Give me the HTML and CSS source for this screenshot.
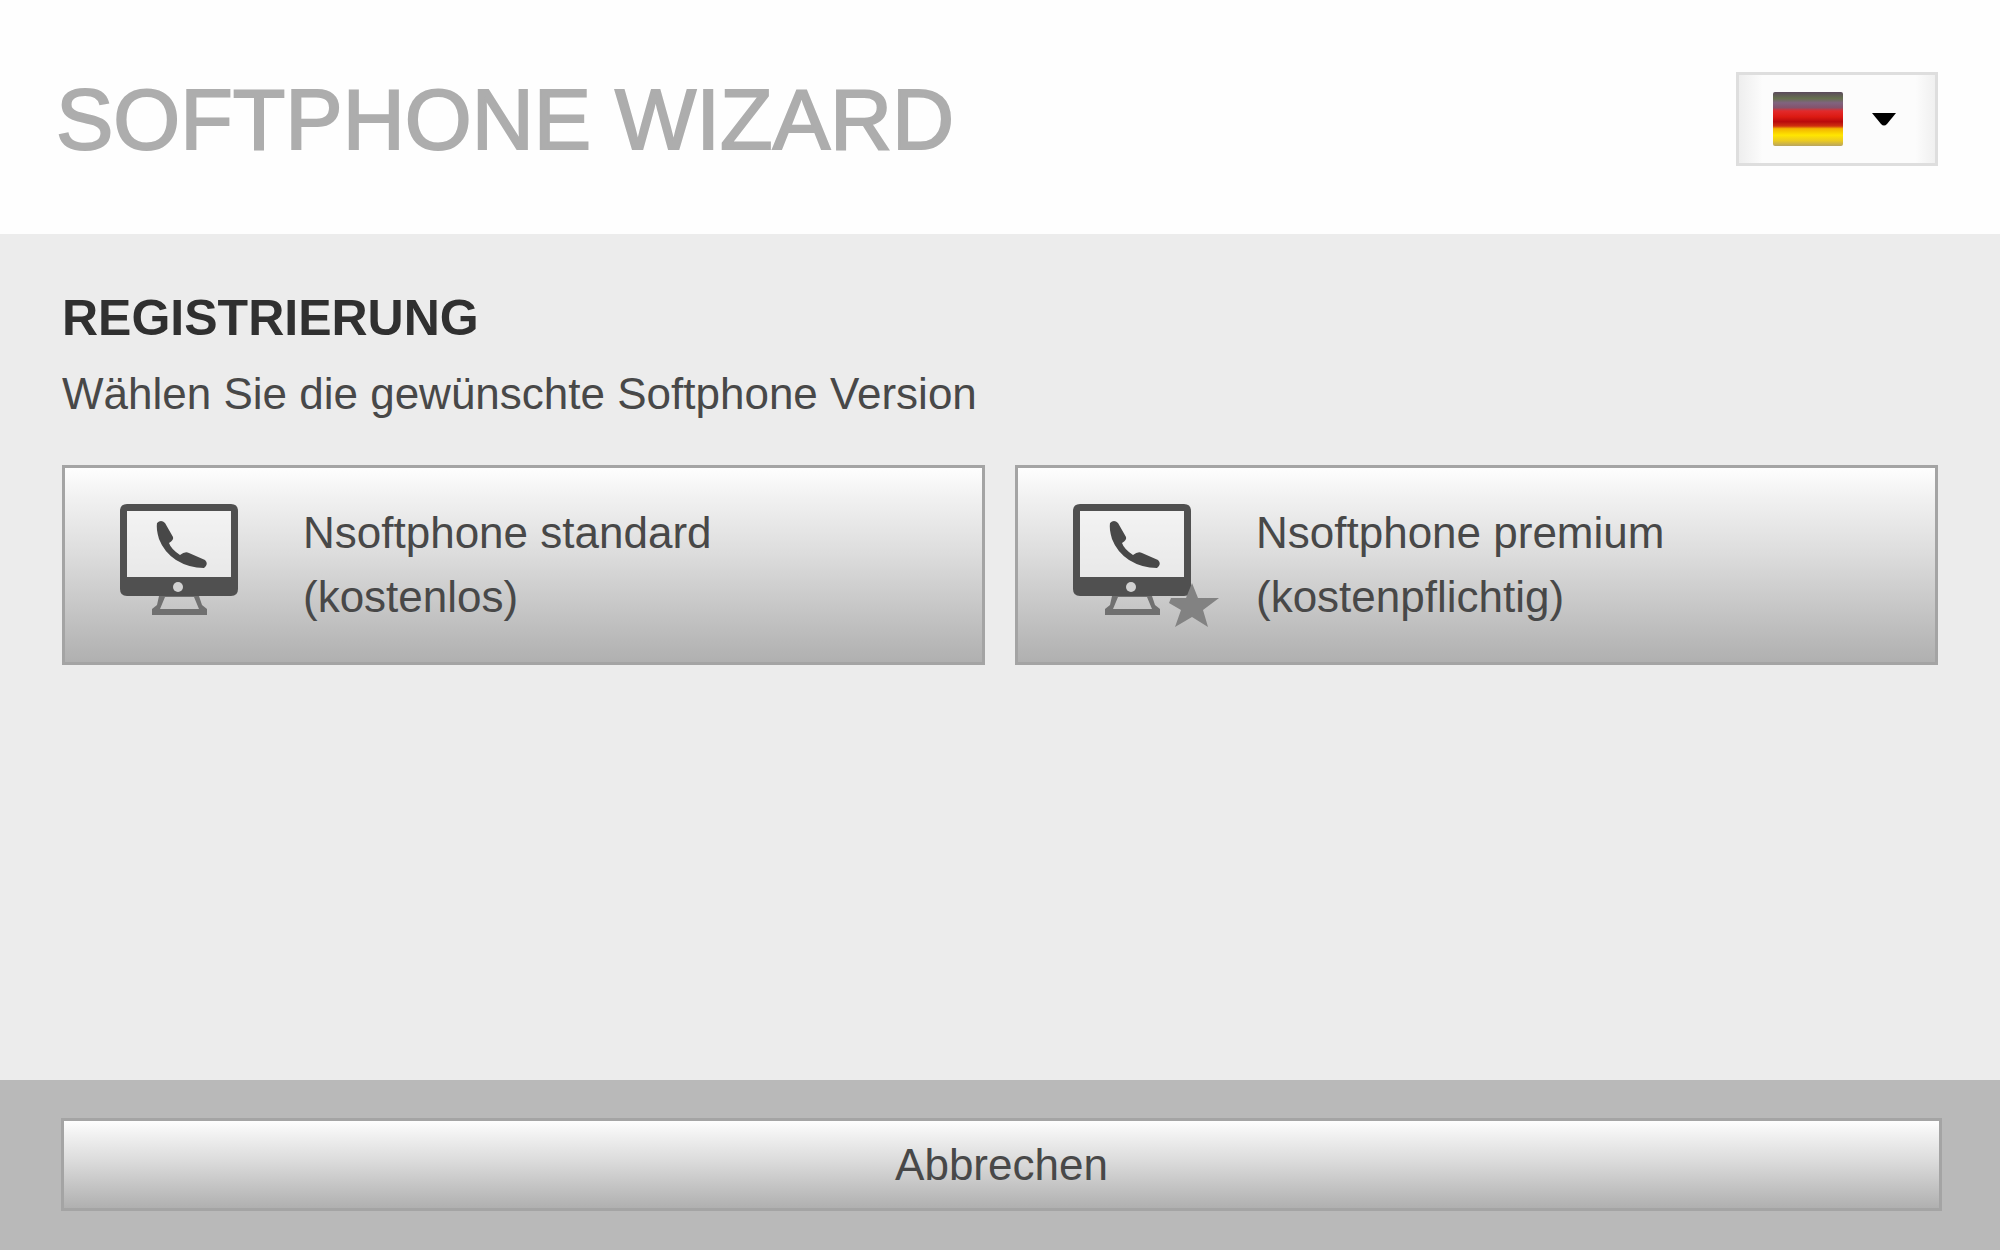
FILE: index.html
```html
<!DOCTYPE html>
<html lang="de">
<head>
<meta charset="utf-8">
<meta name="viewport" content="width=device-width, initial-scale=1">
<title>Softphone Wizard</title>
<link rel="stylesheet" href="styles.css">
</head>
<body>
<header class="header">
  <h1 class="title">SOFTPHONE WIZARD</h1>
  <button class="language" type="button" aria-haspopup="listbox" aria-label="Sprache: Deutsch">
    <svg class="flag" viewBox="0 0 72 56" preserveAspectRatio="none" aria-hidden="true">
      <defs>
        <linearGradient id="flag-shade" x1="0" y1="0" x2="0" y2="1">
          <stop offset="0" stop-color="#5b4a5c"/>
          <stop offset=".12" stop-color="#66704f"/>
          <stop offset=".2" stop-color="#80637f"/>
          <stop offset=".29" stop-color="#85536c"/>
          <stop offset=".35" stop-color="#e22a2c"/>
          <stop offset=".46" stop-color="#dc1a12"/>
          <stop offset=".55" stop-color="#b80a0c"/>
          <stop offset=".63" stop-color="#cf3010"/>
          <stop offset=".68" stop-color="#f3b400"/>
          <stop offset=".8" stop-color="#ffe600"/>
          <stop offset=".9" stop-color="#eccb20"/>
          <stop offset="1" stop-color="#b9a560"/>
        </linearGradient>
      </defs>
      <rect width="72" height="56" rx="2" fill="url(#flag-shade)"/>
    </svg>
    <svg class="caret" viewBox="0 0 26 14" aria-hidden="true">
      <path d="M1 1H25L16 12Q13 15 10 12Z" fill="#000"/>
    </svg>
  </button>
</header>

<main class="main">
  <h2 class="heading">REGISTRIERUNG</h2>
  <p class="lead">Wählen Sie die gewünschte Softphone Version</p>
  <div class="choices">
    <button class="panel choice" type="button">
      <svg class="choice-icon" viewBox="0 0 150 124" aria-hidden="true">
        <use href="#monitor"/>
      </svg>
      <span class="choice-label">Nsoftphone standard<br>(kostenlos)</span>
    </button>
    <button class="panel choice" type="button">
      <svg class="choice-icon" viewBox="0 0 150 124" aria-hidden="true">
        <defs>
          <g id="monitor">
            <path fill="#505050" fill-rule="evenodd" d="M8 1H112Q119 1 119 8V86Q119 93 112 93H8Q1 93 1 86V8Q1 1 8 1ZM8 8V74H112V8Z"/>
            <path fill="#f6f6f6" fill-opacity=".6" d="M8 8H112V74H8Z"/>
            <circle cx="59" cy="84" r="5" fill="#d2d2d2"/>
            <path fill="#707070" fill-rule="evenodd" d="M40 93H80L83 102L88 106V112H33V106L38 102ZM46 94L41 106H80L75 94Z"/>
            <path fill="#484848" d="M38 20Q42 16 46 20L54 34Q55 37 50 40Q52 46 61 52Q66 48 70 50L86 57Q90 61 85 65Q70 65 57 57Q45 49 40 36Q37 26 38 20Z"/>
          </g>
        </defs>
        <use href="#monitor"/>
        <path fill="#828282" d="M120 80L126 95L147 95L131 107L136 124L120 114L103 124L109 107L97 100L99 95L114 95Z"/>
      </svg>
      <span class="choice-label">Nsoftphone premium<br>(kostenpflichtig)</span>
    </button>
  </div>
</main>

<footer class="footer">
  <button class="panel cancel" type="button">Abbrechen</button>
</footer>
</body>
</html>
```
FILE: styles.css
```css
* {
  box-sizing: border-box;
}

body {
  margin: 0;
  min-height: 100vh;
  display: flex;
  flex-direction: column;
  background: #ececec;
  color: #484848;
  font-family: "Liberation Sans", Arial, sans-serif;
  font-size: 44px;
  line-height: 64px;
}

button {
  margin: 0;
  color: inherit;
  font: inherit;
  cursor: pointer;
}

.header {
  display: flex;
  align-items: center;
  justify-content: space-between;
  padding: 71px 62px 67px 56px;
  background: #fefefe;
}

.title {
  margin: 0;
  color: #adadad;
  font-size: 86px;
  font-weight: 400;
  line-height: 96px;
  -webkit-text-stroke: 2px #adadad;
}

.language {
  display: flex;
  align-items: center;
  gap: 28px;
  height: 94px;
  padding: 0 38px 0 34px;
  border: 3px solid #dedede;
  background: linear-gradient(90deg, #eee, #fcfcfc 12%, #fcfcfc 90%, #f0f0f0);
}

.flag {
  width: 70px;
  height: 54px;
}

.caret {
  width: 26px;
  height: 14px;
}

.main {
  flex: 1;
  padding: 52px 62px;
}

.heading {
  margin: 0;
  color: #303030;
  font-size: 50px;
  font-weight: 700;
  line-height: 64px;
}

.lead {
  margin: 12px 0 39px;
}

.choices {
  display: grid;
  grid-template-columns: 1fr 1fr;
  gap: 30px;
}

.panel {
  border: 3px solid #a4a4a4;
  background: linear-gradient(#fefefe, #f2f2f2 14%, #dcdcdc 45%, #b0b0b0);
}

.choice {
  display: flex;
  align-items: center;
  gap: 34px;
  height: 200px;
  padding: 0 54px;
  text-align: left;
}

.choice-icon {
  flex: none;
  width: 150px;
  height: 124px;
}

.footer {
  padding: 38px 58px 39px 61px;
  background: #b9b9b9;
}

.cancel {
  width: 100%;
  height: 93px;
}
```
